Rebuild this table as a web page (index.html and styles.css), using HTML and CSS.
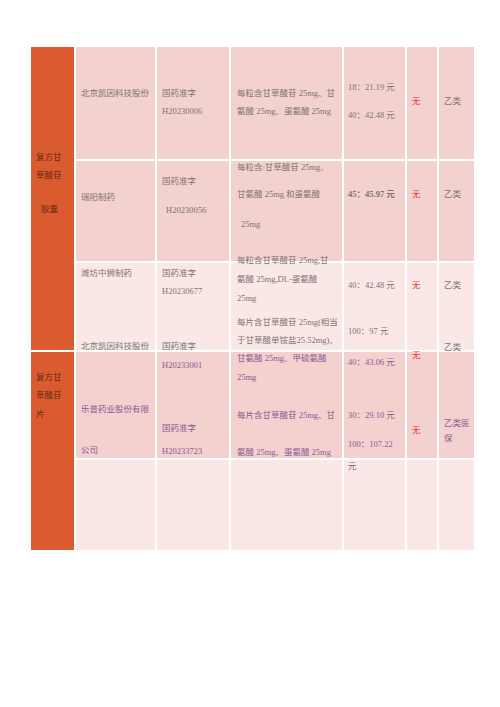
FILE: index.html
```html
<!DOCTYPE html>
<html lang="zh">
<head>
<meta charset="utf-8">
<link rel="stylesheet" href="styles.css">
</head>
<body>
<div class="sheet">
  <div class="drug drug-a"><p class="l1">复方甘</p><p class="l2">草酸苷</p><p class="l3">胶囊</p></div>

  <div class="cell dark r1 name"><p>北京凯因科技股份</p></div>
  <div class="cell dark r1 code"><p>国药准字</p><p class="g8">H20230006</p></div>
  <div class="cell dark r1 spec"><p>每粒含甘草酸苷 25mg、甘</p><p class="g8">氨酸 25mg、蛋氨酸 25mg</p></div>
  <div class="cell dark r1 price"><p>18：21.19 元</p><p class="g18">40：42.48 元</p></div>
  <div class="cell dark r1 none"><p class="red">无</p></div>
  <div class="cell dark r1 cls"><p>乙类</p></div>

  <div class="cell dark r2 name"><p>瑞阳制药</p></div>
  <div class="cell dark r2 code"><p>国药准字</p><p class="g19 ind">H20230056</p></div>
  <div class="cell dark r2 spec over"><p>每粒含:甘草酸苷 25mg、</p><p class="g17">甘氨酸 25mg 和蛋氨酸</p><p class="g20 ind">25mg</p><p class="g26">每粒含甘草酸苷 25mg,甘</p></div>
  <div class="cell dark r2 price"><p class="bold">45：45.97 元</p></div>
  <div class="cell dark r2 none"><p class="red">无</p></div>
  <div class="cell dark r2 cls"><p>乙类</p></div>

  <div class="cell light r3 name"><p>潍坊中狮制药</p><p class="g63">北京凯因科技股份</p></div>
  <div class="cell light r3 code"><p>国药准字</p><p class="g8">H20230677</p><p class="g45">国药准字</p></div>
  <div class="cell light r3 spec"><p>氨酸 25mg,DL-蛋氨酸</p><p class="g9">25mg</p><p class="g14">每片含甘草酸苷 25mg(相当</p><p class="g8">于甘草酸单铵盐25.52mg)、</p></div>
  <div class="cell light r3 price"><p>40：42.48 元</p><p class="g36">100：97 元</p></div>
  <div class="cell light r3 none"><p class="red">无</p></div>
  <div class="cell light r3 cls"><p>乙类</p><p class="g52">乙类</p></div>

  <div class="drug drug-b"><p>复方甘</p><p class="g8">草酸苷</p><p class="g9">片</p></div>

  <div class="cell dark r4 name purple"><p>乐普药业股份有限</p><p class="g31">公司</p></div>
  <div class="cell dark r4 code purple"><p>H20233001</p><p class="g53">国药准字</p><p class="g13">H20233723</p></div>
  <div class="cell dark r4 spec purple"><p>甘氨酸 25mg、甲硫氨酸</p><p class="g9">25mg</p><p class="g28">每片含甘草酸苷 25mg、甘</p><p class="g27">氨酸 25mg、蛋氨酸 25mg</p></div>
  <div class="cell dark r4 price purple over"><p>40：43.06 元</p><p class="g43">30：29.10 元</p><p class="g19">100：107.22</p><p class="g12">元</p></div>
  <div class="cell dark r4 none"><p class="red">无</p><p class="red g65">无</p></div>
  <div class="cell dark r4 cls purple"><p>乙类医</p><p class="g5">保</p></div>

  <div class="cell light r5"></div>
  <div class="cell light r5"></div>
  <div class="cell light r5"></div>
  <div class="cell light r5"></div>
  <div class="cell light r5"></div>
  <div class="cell light r5"></div>
</div>
</body>
</html>
```
FILE: styles.css
```css
html, body {
  margin: 0;
  padding: 0;
  background: #ffffff;
}
body {
  width: 500px;
  height: 707px;
  font-family: "Liberation Serif", "Noto Sans CJK SC", serif;
  font-size: 8.5px;
  line-height: 10px;
  color: #7f7272;
}
p {
  margin: 0;
  white-space: nowrap;
}
.sheet {
  margin: 47px 0 0 31px;
  display: grid;
  grid-template-columns: 43px 79px 72px 111px 61px 30px 35px;
  grid-template-rows: 112px 100px 87px 106px 90px;
  gap: 2px;
  width: 443px;
}
.drug {
  background: #d95b2f;
  color: #6e2812;
  padding-left: 5px;
  grid-column: 1;
}
.drug-a {
  grid-row: 1 / span 3;
  padding-top: 105px;
}
.drug-a .l2 { margin-top: 8px; }
.drug-a .l3 { margin-top: 24px; padding-left: 5px; }
.drug-b {
  grid-row: 4 / span 2;
  padding-top: 20px;
}
.cell {
  overflow: visible;
}
.dark { background: #f2d1ce; }
.light { background: #fae8e7; }
.over { position: relative; z-index: 1; }

.name { padding-left: 5px; }
.code { padding-left: 5px; }
.spec { padding-left: 6px; }
.price { padding-left: 4px; }
.none { padding-left: 5px; }
.cls { padding-left: 5px; }

.r1.name, .r1.code, .r1.spec { padding-top: 41px; }
.r1.price { padding-top: 35px; }
.r1.none, .r1.cls { padding-top: 49px; }

.r2.name { padding-top: 31px; }
.r2.code { padding-top: 15px; }
.r2.spec { padding-top: 1px; }
.r2.price, .r2.none, .r2.cls { padding-top: 28px; }

.r3.name, .r3.code { padding-top: 5px; }
.r3.spec { padding-top: 11px; }
.r3.price, .r3.none, .r3.cls { padding-top: 17px; }

.r4.name { padding-top: 52px; }
.r4.code { padding-top: 8px; }
.r4.spec { padding-top: 1px; }
.r4.price { padding-top: 5px; }
.r4.none { padding-top: 0; }
.r4.none p:first-child { margin-top: -2px; }
.r4.cls { padding-top: 66px; }

.ind { padding-left: 4px; }
.bold { font-weight: bold; }
.red { color: #e8403a; }
.purple { color: #8a5a95; }

.g5 { margin-top: 5px; }
.g8 { margin-top: 8px; }
.g9 { margin-top: 9px; }
.g12 { margin-top: 12px; }
.g13 { margin-top: 13px; }
.g14 { margin-top: 14px; }
.g17 { margin-top: 17px; }
.g18 { margin-top: 18px; }
.g19 { margin-top: 19px; }
.g20 { margin-top: 20px; }
.g26 { margin-top: 26px; }
.g27 { margin-top: 27px; }
.g28 { margin-top: 28px; }
.g31 { margin-top: 31px; }
.g36 { margin-top: 36px; }
.g43 { margin-top: 43px; }
.g45 { margin-top: 45px; }
.g52 { margin-top: 52px; }
.g53 { margin-top: 53px; }
.g63 { margin-top: 63px; }
.g65 { margin-top: 65px; }
```
